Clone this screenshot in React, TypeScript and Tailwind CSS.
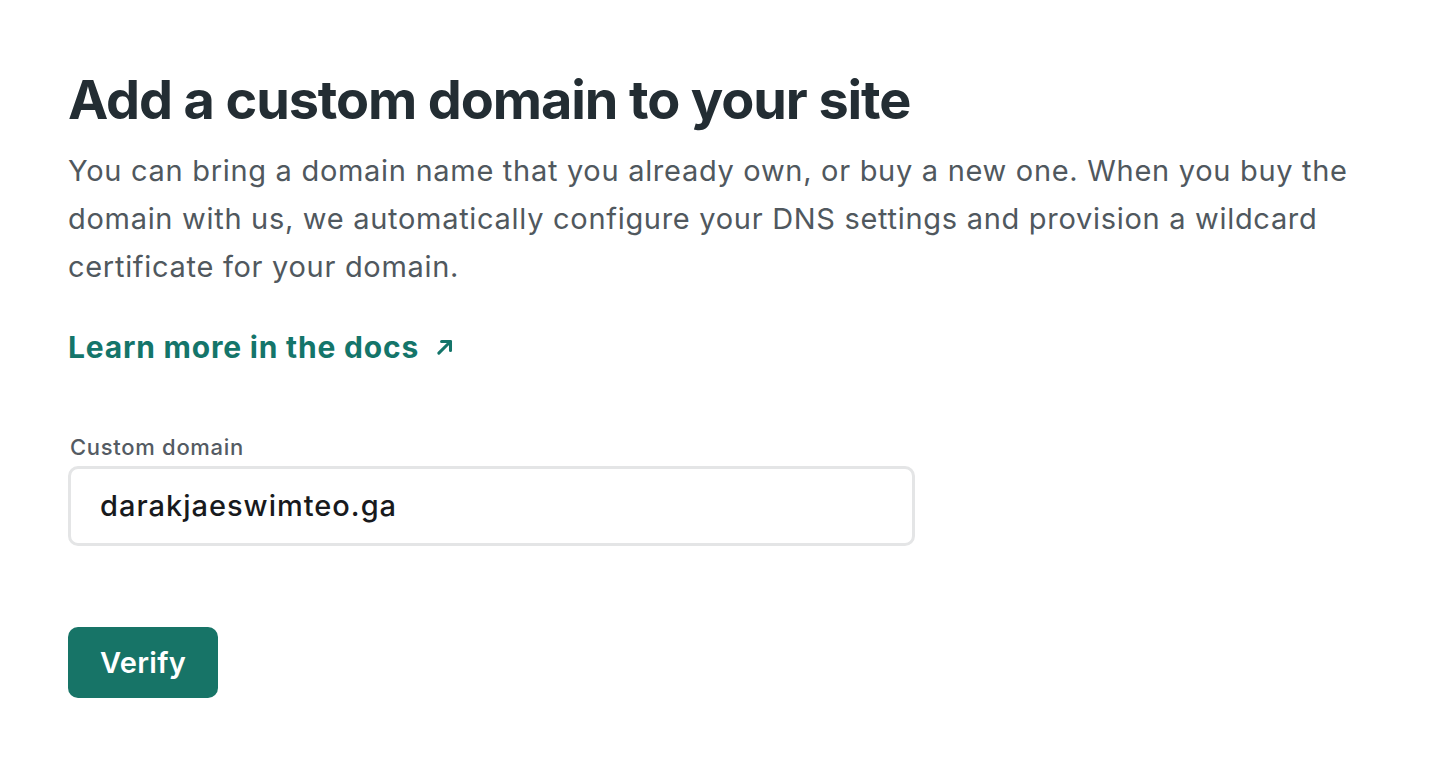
export default function App() {
  return (
    <div className="min-h-screen bg-white font-['Inter',sans-serif]">
      <div className="px-[68px] pt-[70px]">
        <h1 className="text-[54px] font-bold leading-[60px] tracking-[-1.1px] text-[#232d33]">
          Add a custom domain to your site
        </h1>
        <p className="mt-[17px] max-w-[1300px] text-[29px] leading-[48px] tracking-[0.7px] text-[#50585e]">
          You can bring a domain name that you already own, or buy a new one. When you buy the
          domain with us, we automatically configure your DNS settings and provision a wildcard
          certificate for your domain.
        </p>
        <a
          href="#"
          className="mt-[36px] inline-flex items-center gap-[15px] text-[30px] font-bold leading-[40px] tracking-[0.8px] text-[#14756a]"
        >
          Learn more in the docs
          <svg width="22" height="22" viewBox="0 0 16 16" fill="none" stroke="currentColor" strokeWidth="2.2" strokeLinecap="round" strokeLinejoin="round">
            <path d="M3.5 12.5L12 4" />
            <path d="M5.5 4H12V10.5" />
          </svg>
        </a>
        <div className="mt-[65px] w-[847px]">
          <label className="block pl-[2px] text-[22px] font-medium leading-[30px] tracking-[0.7px] text-[#545b63]">
            Custom domain
          </label>
          <div className="mt-[4px] flex h-[80px] items-center rounded-[10px] border-[3px] border-[#e4e5e6] px-[29px]">
            <span className="text-[29px] font-medium tracking-[1px] text-[#181a1d]">darakjaeswimteo.ga</span>
          </div>
        </div>
        <button className="mt-[81px] flex h-[71px] items-center rounded-[10px] bg-[#177467] px-[32px] text-[29px] font-semibold tracking-[0.3px] text-white">
          Verify
        </button>
      </div>
    </div>
  );
}
